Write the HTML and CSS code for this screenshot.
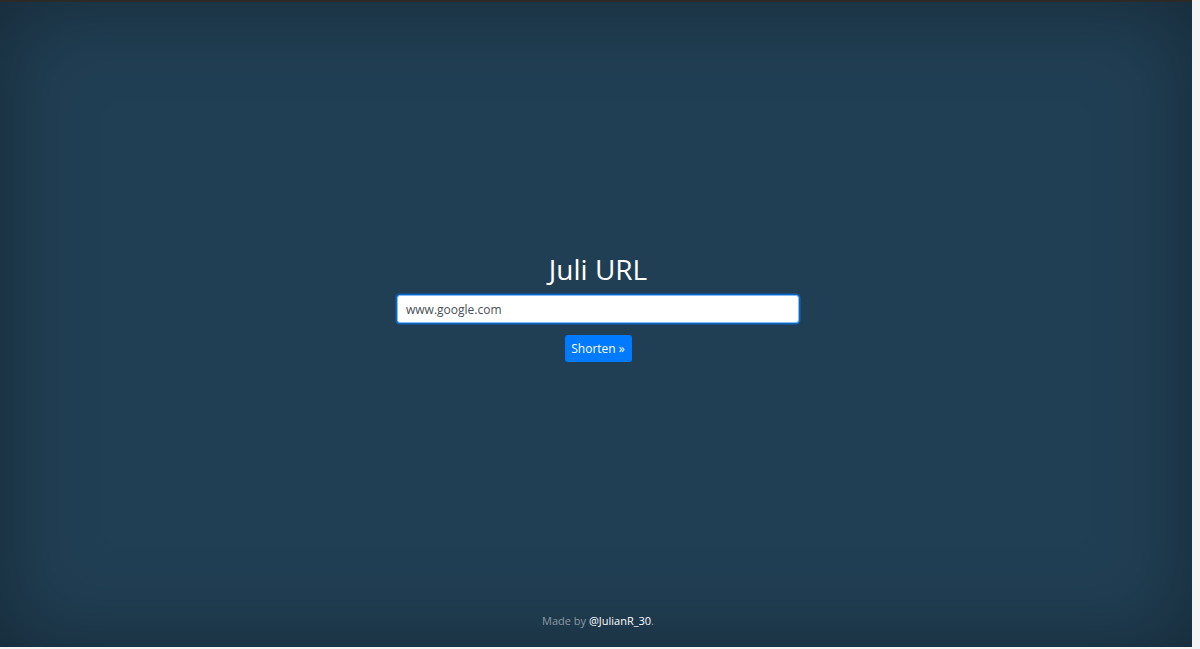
FILE: index.html
```html
<!DOCTYPE html>
<html lang="en">
<head>
<meta charset="utf-8">
<title>Juli URL</title>
<link rel="stylesheet" href="styles.css">
</head>
<body>
<div class="frame">
  <main class="cover">
    <h1 class="title">Juli URL</h1>
    <form class="shorten-form">
      <input class="url-input" type="text" value="www.google.com">
      <button class="btn-primary" type="button">Shorten &raquo;</button>
    </form>
  </main>
  <footer class="footer">Made by <a class="footer-link" href="#">@JulianR_30</a>.</footer>
</div>
</body>
</html>
```
FILE: styles.css
```css
html, body {
  margin: 0;
  padding: 0;
  background: #f4f4f4;
}
body {
  font-family: "Open Sans", "Noto Sans", sans-serif;
}
.frame {
  width: 1192px;
  height: 647px;
  box-sizing: border-box;
  border-top: 2px solid #2b2a28;
  padding-left: 4px;
  background: #213f54;
  box-shadow: inset 0 0 90px rgba(0, 0, 0, 0.35);
  display: flex;
  flex-direction: column;
  color: #fff;
}
.cover {
  padding-top: 250px;
  display: flex;
  flex-direction: column;
  align-items: center;
}
.title {
  margin: 0;
  font-size: 28px;
  font-weight: 400;
  line-height: 34px;
  color: #fff;
}
.shorten-form {
  margin-top: 9px;
  display: flex;
  flex-direction: column;
  align-items: center;
}
.url-input {
  width: 402px;
  height: 28px;
  box-sizing: border-box;
  border: 1px solid #80bdff;
  border-radius: 3px;
  box-shadow: 0 0 0 1.5px rgba(0, 123, 255, 0.6);
  padding: 0 8px;
  font-family: "Open Sans", "Noto Sans", sans-serif;
  font-size: 12px;
  color: #495057;
  background: #fff;
  outline: none;
}
.btn-primary {
  margin-top: 12px;
  width: 67px;
  height: 27px;
  box-sizing: border-box;
  border: none;
  border-radius: 3px;
  background: #007bff;
  color: #fff;
  font-family: "Open Sans", "Noto Sans", sans-serif;
  font-size: 12px;
  padding: 0;
}
.footer {
  margin-top: auto;
  padding-bottom: 16px;
  line-height: 20px;
  text-align: center;
  font-size: 11px;
  color: #8c9ba6;
}
.footer-link {
  color: #fff;
  text-decoration: none;
}
```
